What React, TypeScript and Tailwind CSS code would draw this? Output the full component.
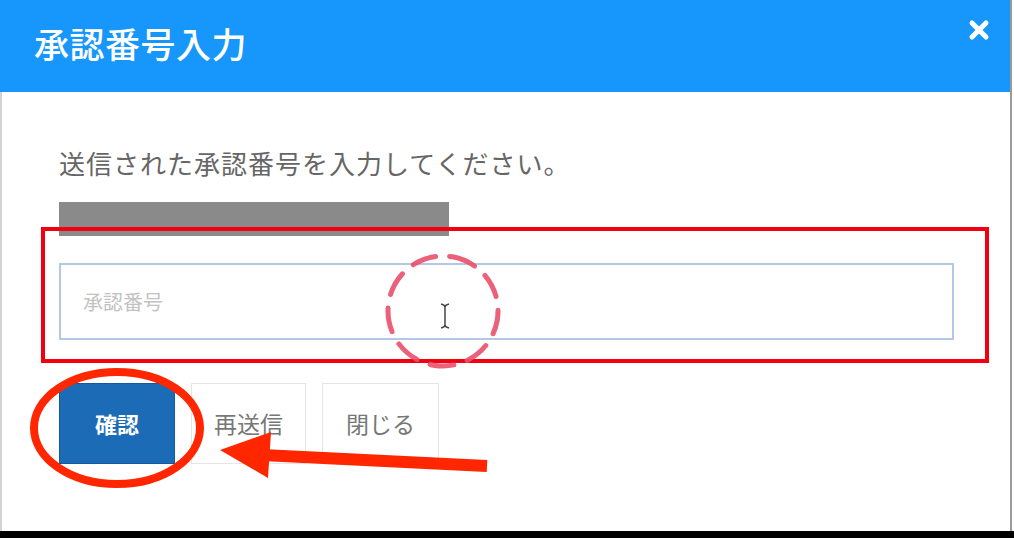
import React from 'react';

const FONT = { fontFamily: '"Noto Sans CJK JP", "Noto Sans", sans-serif' };

function CloseIcon() {
  return (
    <svg width="22" height="22" viewBox="0 0 22 22" className="mt-[19px]">
      <path d="M4 4 L18 18 M18 4 L4 18" stroke="#fff" strokeWidth="5" strokeLinecap="round" />
    </svg>
  );
}

// annotation layer drawn over the dialog (red box, dashed ring, ellipse, arrow)
function Annotations() {
  return (
    <svg className="pointer-events-none absolute inset-0" width="1014" height="538" viewBox="0 0 1014 538">
      <rect x="43" y="229" width="944" height="132" fill="none" stroke="#f2000f" strokeWidth="4" />
      <circle
        cx="443"
        cy="311"
        r="55"
        fill="none"
        stroke="#e8506a"
        strokeOpacity="0.9"
        strokeWidth="5"
        strokeDasharray="24 14"
        strokeLinecap="round"
        transform="rotate(-80 443 311)"
      />
      <g stroke="#444" strokeWidth="1.5" fill="none">
        <path d="M445 306 L445 326" />
        <path d="M441 304 Q445 305 445 307 Q445 305 449 304" />
        <path d="M441 328 Q445 327 445 325 Q445 327 449 328" />
      </g>
      <ellipse cx="117" cy="428" rx="83" ry="56" fill="none" stroke="#ff2600" strokeWidth="8" />
      <path d="M487 466 L262 455" stroke="#ff2600" strokeWidth="12" />
      <polygon points="220,450 271,432 268,478" fill="#ff2600" />
    </svg>
  );
}

export default function App() {
  return (
    <div className="relative flex h-[538px] w-[1014px] flex-col bg-black" style={FONT}>
      <div className="flex h-[531px] bg-white">
        <div className="flex w-[1012px] flex-col border-r-2 border-[#9a9a9a]">
          <header className="flex h-[92px] shrink-0 items-start justify-between bg-[#1796fb] pl-[34px] pr-[20px]">
            <h1 className="mt-[25px] text-[35px] leading-none font-medium tracking-[0.5px] text-white">承認番号入力</h1>
            <CloseIcon />
          </header>

          <div className="flex flex-1 flex-col border-l-2 border-[#d4d4d4] pl-[57px] pr-[56px] pt-[58px]">
            <p className="text-[26px] leading-none tracking-[1px] text-[#666]">送信された承認番号を入力してください。</p>

            <div className="mt-[26px] h-[34px] w-[390px] bg-[#8a8a8a]" />

            <div className="mt-[27px] flex h-[77px] w-[895px] items-center border-2 border-[#b3c8e6] pl-[22px]">
              <span className="text-[20px] leading-none text-[#c2c2c2]">承認番号</span>
            </div>

            <div className="mt-[43px] flex gap-[16px]">
              <button className="flex h-[81px] w-[116px] items-center justify-center border border-[#14599c] bg-[#1b6bb6] text-[22px] font-bold text-white">
                確認
              </button>
              <button className="flex h-[81px] w-[115px] items-center justify-center border border-[#e6e6e6] bg-white text-[23px] text-[#777]">
                再送信
              </button>
              <button className="flex h-[81px] w-[117px] items-center justify-center border border-[#e6e6e6] bg-white text-[23px] text-[#777]">
                閉じる
              </button>
            </div>
          </div>
        </div>
      </div>
      <Annotations />
    </div>
  );
}
